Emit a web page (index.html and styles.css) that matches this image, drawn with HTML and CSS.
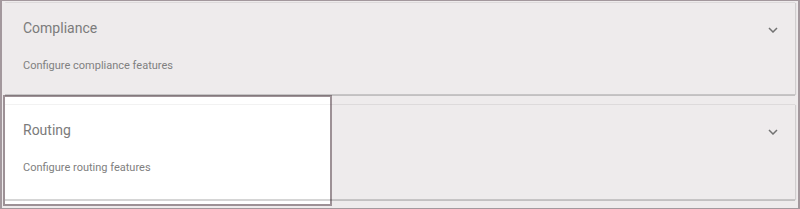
FILE: index.html
```html
<!DOCTYPE html>
<html lang="en">
<head>
  <meta charset="UTF-8" />
  <title>Settings</title>
  <link rel="stylesheet" href="styles.css">
</head>
<body>
  <div class="frame">
    <div class="panel first">
      <div class="panel-text">
        <h2>Compliance</h2>
        <p>Configure compliance features</p>
      </div>
      <svg class="chevron" viewBox="0 0 10 6" width="10" height="6"><path d="M1 1 L5 5 L9 1" fill="none" stroke="#727272" stroke-width="1.5"/></svg>
    </div>

    <div class="panel second">
      <div class="panel-text">
        <h2>Routing</h2>
        <p>Configure routing features</p>
      </div>
      <svg class="chevron" viewBox="0 0 10 6" width="10" height="6"><path d="M1 1 L5 5 L9 1" fill="none" stroke="#727272" stroke-width="1.5"/></svg>
    </div>

    <!-- caixa de destaque -->
    <div class="highlight"></div>
  </div>
</body>
</html>
```

FILE: styles.css
```css
* {
  margin: 0;
  padding: 0;
  box-sizing: border-box;
  font-family: Roboto, 'Liberation Sans', sans-serif;
}

body {
  background: #eeebec;
}

.frame {
  position: relative;
  width: 800px;
  height: 209px;
  border: 1px solid #a3989d;
  border-left-width: 2px;
  border-right-width: 2px;
  padding: 2px 3px 0 3px;
  display: flex;
  flex-direction: column;
  gap: 10px;
  overflow: hidden;
}

.panel {
  position: relative;
  display: flex;
  justify-content: space-between;
  align-items: flex-start;
  background: #eeebec;
  padding: 16px 18px 0 18px;
  box-shadow: 1px 0 1px rgba(0, 0, 0, 0.12);
}

.panel.first {
  height: 92px;
}

.panel.second {
  height: 95px;
}

/* bordas do card por cima do destaque */
.panel::after {
  content: '';
  position: absolute;
  top: -1px;
  left: 0;
  right: 0;
  bottom: -1px;
  border-top: 1px solid rgba(0, 0, 0, 0.05);
  border-bottom: 2px solid rgba(0, 0, 0, 0.16);
  z-index: 2;
  pointer-events: none;
}

.panel-text {
  position: relative;
  z-index: 2;
}

.panel h2 {
  font-size: 14px;
  font-weight: 400;
  line-height: 18px;
  color: #7b7b7b;
}

.panel p {
  margin-top: 21px;
  font-size: 11px;
  line-height: 16px;
  color: #808080;
}

.chevron {
  margin-top: 8px;
  margin-right: -1px;
}

.highlight {
  position: absolute;
  left: 1px;
  top: 94px;
  width: 329px;
  height: 111px;
  background: #fff;
  border: 2px solid #9d9196;
  z-index: 1;
  pointer-events: none;
}
```
